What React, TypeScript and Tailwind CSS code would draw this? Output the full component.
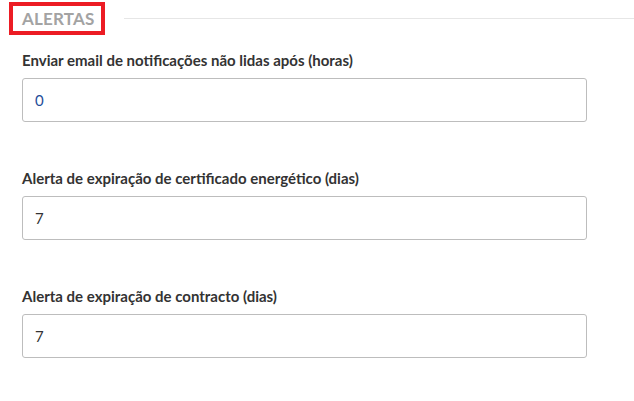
export default function App() {
  const fields = [
    { label: "Enviar email de notificações não lidas após (horas)", value: "0", blue: true },
    { label: "Alerta de expiração de certificado energético (dias)", value: "7", blue: false },
    { label: "Alerta de expiração de contracto (dias)", value: "7", blue: false },
  ];

  return (
    <div className="w-[634px] h-[401px] bg-white overflow-hidden" style={{ fontFamily: "Lato, 'Open Sans', sans-serif" }}>
      {/* Section header */}
      <div className="flex items-center pt-[2px] pl-[9px]">
        <div className="border-4 border-[#ec1c24] w-[96px] h-[33px] pl-[9px] flex items-center">
          <span className="text-[17px] font-bold text-[#a3a3a3] tracking-[0.2px]">ALERTAS</span>
        </div>
        <div className="flex-1 ml-[19px] h-px bg-[#e6e6e6]" />
      </div>

      {/* Fields */}
      <div className="pl-[22px] w-[587px] flex flex-col gap-[46px] mt-[15px]">
        {fields.map((f) => (
          <div key={f.label} className="flex flex-col">
            <label className="text-[15px] font-bold text-[#333333] leading-[20px] mb-[8px]">{f.label}</label>
            <div className="h-[44px] border border-[#bdbdbd] rounded-[3px] flex items-center px-[12px]">
              <span className={`text-[15px] ${f.blue ? "text-[#1f4e9a]" : "text-[#333333]"}`}>{f.value}</span>
            </div>
          </div>
        ))}
      </div>
    </div>
  );
}
